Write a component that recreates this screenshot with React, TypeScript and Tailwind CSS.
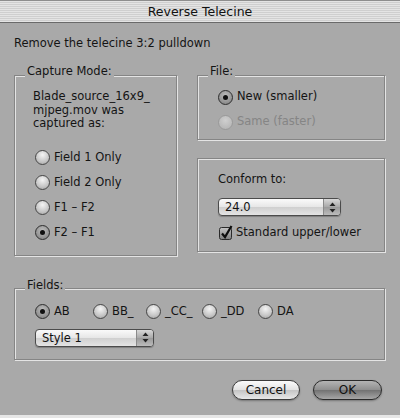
function Radio({ checked = false, disabled = false, label }: { checked?: boolean; disabled?: boolean; label: string }) {
  return (
    <div className={`flex h-[18px] items-center ${disabled ? "text-[#858585]" : "text-[#141414]"}`}>
      <span
        className={`flex h-[15px] w-[15px] shrink-0 items-center justify-center rounded-full border ${
          disabled
            ? "border-[#9a9a9a] bg-[radial-gradient(circle_at_50%_35%,#cfcfcf,#b0b0b0)]"
            : checked
            ? "border-[#2e2e2e] bg-[radial-gradient(circle_at_50%_35%,#bdbdbd,#7c7c7c)]"
            : "border-[#474747] bg-[radial-gradient(circle_at_50%_30%,#f4f4f4,#c6c6c6_60%,#9e9e9e)]"
        }`}
      >
        {checked && <span className="h-[5px] w-[5px] rounded-full bg-[#111]" />}
      </span>
      <span className="ml-[4px] whitespace-nowrap">{label}</span>
    </div>
  );
}

function Popup({ value, width }: { value: string; width: string }) {
  return (
    <div className={`flex h-[18px] ${width} overflow-hidden rounded-[4px] border border-[#4b4b4b] bg-[linear-gradient(#fafafa,#e6e6e6_50%,#cfcfcf_51%,#e4e4e4)] shadow-[0_1px_1px_rgba(0,0,0,0.25)]`}>
      <span className="flex-1 pl-[6px] leading-[16px] text-[#111]">{value}</span>
      <span className="flex w-[17px] flex-col items-center justify-center border-l border-[#8a8a8a] bg-[linear-gradient(#d8d8d8,#a8a8a8_50%,#9a9a9a_51%,#bcbcbc)]">
        <svg width="7" height="11" viewBox="0 0 7 11">
          <path d="M3.5 0.5 L6.5 4 L0.5 4 Z" fill="#222" />
          <path d="M3.5 10.5 L6.5 7 L0.5 7 Z" fill="#222" />
        </svg>
      </span>
    </div>
  );
}

function Legend({ children }: { children: string }) {
  return <legend className="ml-[10px] bg-[#a9a9a9] px-[2px] pb-[8px] leading-[14px] text-[#141414]">{children}</legend>;
}

const box = "border border-[#858585] shadow-[inset_1px_1px_0_#e4e4e4,1px_1px_0_#e4e4e4]";

export default function App() {
  return (
    <div className="flex h-[418px] w-[400px] flex-col overflow-hidden bg-[#a9a9a9] font-['DejaVu_Sans',sans-serif] text-[11.5px]">
      <div className="h-[23px] shrink-0 border-t border-b border-t-[#8e8e8e] border-b-[#6a6a6a] bg-[repeating-linear-gradient(#e4e4e4_0px,#e4e4e4_1px,#cfcfcf_1px,#cfcfcf_2px)] text-center text-[12.5px] leading-[21px] text-[#111]">
        Reverse Telecine
      </div>

      <div className="flex flex-1 flex-col pl-[14px] pr-[15px]">
        <div className="mt-[12px] leading-[16px] text-[#141414]">Remove the telecine 3:2 pulldown</div>

        <div className="mt-[13px] flex gap-[20px]">
          <fieldset className={`w-[163px] ${box}`}>
            <Legend>Capture Mode:</Legend>
            <div className="pb-[13px] pl-[18px]">
              <div className="pt-[4px] leading-[13.5px] text-[#141414]">
                Blade_source_16x9_
                <br />
                mjpeg.mov was
                <br />
                captured as:
              </div>
              <div className="ml-[2px] mt-[18px] flex flex-col gap-[7px]">
                <Radio label="Field 1 Only" />
                <Radio label="Field 2 Only" />
                <Radio label="F1 – F2" />
                <Radio label="F2 – F1" checked />
              </div>
            </div>
          </fieldset>

          <div className="flex w-[188px] flex-col">
            <fieldset className={box}>
              <Legend>File:</Legend>
              <div className="flex flex-col gap-[7px] pb-[8px] pl-[20px] pt-[2px]">
                <Radio label="New (smaller)" checked />
                <Radio label="Same (faster)" disabled />
              </div>
            </fieldset>

            <div className={`mt-[18px] pb-[10px] pl-[20px] pt-[12px] ${box}`}>
              <div className="leading-[16px] text-[#141414]">Conform to:</div>
              <div className="mt-[11px]">
                <Popup value="24.0" width="w-[123px]" />
              </div>
              <div className="mt-[9px] flex h-[16px] items-center text-[#141414]">
                <svg width="16" height="16" viewBox="0 0 16 16" className="shrink-0">
                  <defs>
                    <linearGradient id="cb" x1="0" y1="0" x2="0" y2="1">
                      <stop offset="0" stopColor="#c4c4c4" />
                      <stop offset="1" stopColor="#7e7e7e" />
                    </linearGradient>
                  </defs>
                  <rect x="1.5" y="2.5" width="12" height="12" rx="2" fill="url(#cb)" stroke="#2a2a2a" />
                  <path d="M4 8.5 L7 12 L13.5 1" fill="none" stroke="#0d0d0d" strokeWidth="2.2" />
                </svg>
                <span className="ml-[2px]">Standard upper/lower</span>
              </div>
            </div>
          </div>
        </div>

        <fieldset className={`mt-[22px] ${box}`}>
          <Legend>Fields:</Legend>
          <div className="pb-[12px] pl-[20px]">
            <div className="flex pt-[3px]">
              <div className="w-[58px]"><Radio label="AB" checked /></div>
              <div className="w-[53px]"><Radio label="BB_" /></div>
              <div className="w-[56px]"><Radio label="_CC_" /></div>
              <div className="w-[56px]"><Radio label="_DD" /></div>
              <Radio label="DA" />
            </div>
            <div className="mt-[8px]">
              <Popup value="Style 1" width="w-[119px]" />
            </div>
          </div>
        </fieldset>

        <div className="mr-[3px] mt-[20px] flex justify-end gap-[13px]">
          <button className="h-[20px] w-[68px] rounded-full border border-[#3c3c3c] bg-[linear-gradient(#fbfbfb,#e2e2e2_50%,#c4c4c4_51%,#e8e8e8)] text-[12px] text-[#111] shadow-[0_1px_2px_rgba(0,0,0,0.3)]">
            Cancel
          </button>
          <button className="h-[20px] w-[69px] rounded-full border border-[#2a2a2a] bg-[linear-gradient(#b4b4b4,#8e8e8e_50%,#727272_51%,#a6a6a6)] text-[12px] text-[#111] shadow-[0_1px_2px_rgba(0,0,0,0.3)]">
            OK
          </button>
        </div>
      </div>

      <div className="h-[3px] shrink-0 bg-[#e6e6e6]" />
    </div>
  );
}
